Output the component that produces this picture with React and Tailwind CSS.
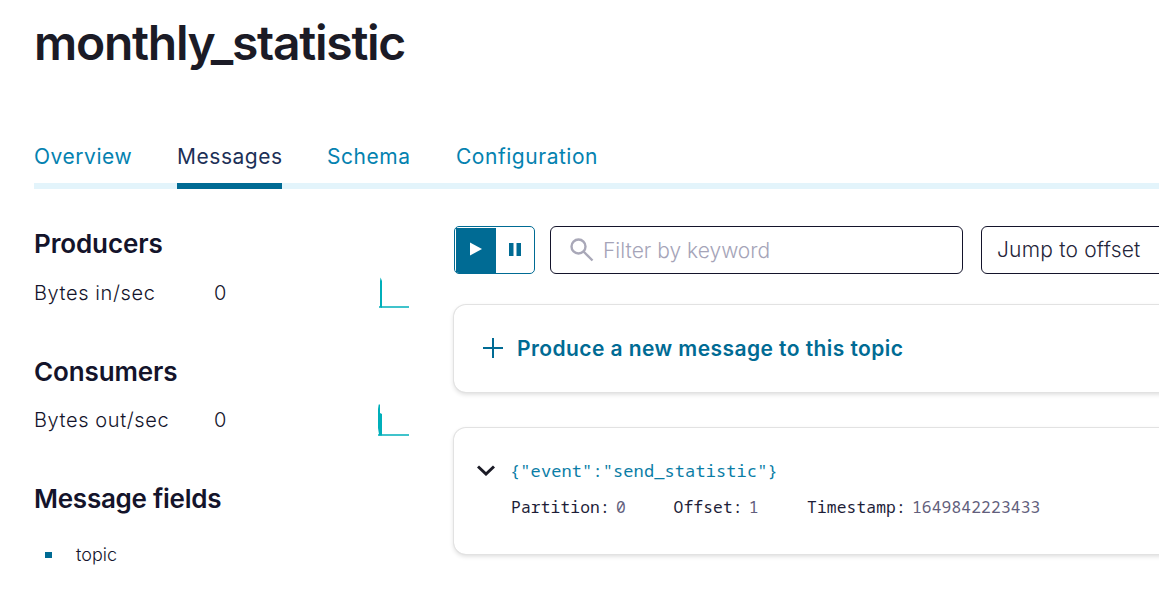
import React from "react";

const TABS = [
  { label: "Overview", active: false, cls: "w-[98px] mr-[45px]" },
  { label: "Messages", active: true, cls: "w-[105px] mr-[45px]" },
  { label: "Schema", active: false, cls: "w-[83px] mr-[46px]" },
  { label: "Configuration", active: false, cls: "" },
];

function Metric({ title, label, value, path, cls }) {
  return (
    <section className="h-[127.5px]">
      <h2 className="h-[34px] text-[26px] font-semibold leading-[34px] tracking-[-0.12px] text-[#14142b]">{title}</h2>
      <div className={"flex h-8 items-center text-[20px] font-[280] leading-8 tracking-[0.6px] text-[#14142b] " + cls}>
        <span className="w-[180px]">{label}</span>
        <span className="grow">{value}</span>
        <svg className="mr-[5px] h-8 w-8 overflow-visible" viewBox="0 0 32 32" fill="none">
          {path}
        </svg>
      </div>
    </section>
  );
}

function Meta({ label, value, cls }) {
  return (
    <span className={cls}>
      <span className="mr-[6px] text-[#1d1d38]">{label}:</span>
      <span className="text-[#625e7c]">{value}</span>
    </span>
  );
}

export default function App() {
  return (
    <div className="h-[594px] w-[1159px] overflow-hidden bg-white pl-[34px] font-['Inter',sans-serif]">
      <h1 className="pt-[14px] text-[48px] font-semibold leading-[58px] tracking-[-1.27px] text-[#1b1b26]">monthly_statistic</h1>
      <nav className="mt-[68px] flex h-[49px] border-b-[6px] border-[#e3f4fb] text-[21px] leading-[34px] tracking-[0.53px]">
        {TABS.map((t) => (
          <div key={t.label} className={t.cls + (t.active ? " h-[49px] shrink-0 border-b-[6px] border-[#006b94] text-[#1c3057]" : " shrink-0 text-[#0482b0]")}>
            {t.label}
          </div>
        ))}
      </nav>
      <div className="flex">
        <aside className="w-[381px] shrink-0 pt-[38px]">
          <Metric
            title="Producers"
            label="Bytes in/sec"
            value="0"
            cls="mt-4"
            path={
              <>
                <path d="M1 30 H31" stroke="#40c3cb" strokeWidth="2" />
                <path d="M2 30 V4 L2.6 0.5 L4 4 V31Z" fill="#00afba" />
              </>
            }
          />
          <Metric
            title="Consumers"
            label="Bytes out/sec"
            value="0"
            cls="mt-[15px]"
            path={
              <>
                <path d="M0 31 H31" stroke="#40c3cb" strokeWidth="2" />
                <path d="M0 24 V5 L0.7 0.5 H2 V9 L4 10 V31.5 H1.2Z" fill="#00afba" />
              </>
            }
          />
          <h2 className="text-[26px] font-semibold leading-[34px] tracking-[-0.25px] text-[#14142b]">Message fields</h2>
          <ul className="mt-[22px] pl-[11px]">
            <li className="flex h-[33px] items-center text-[18px] font-[280] text-[#14142b]">
              <span className="mr-[24px] h-[6px] w-[7px] bg-[#006b94]" />
              topic
            </li>
          </ul>
        </aside>
        <main className="ml-[38px] w-[720px] shrink-0 pt-[37px]">
          <div className="flex h-12 pl-px">
            <div className="flex w-[81px] shrink-0 overflow-hidden rounded-[5px] border border-[#006b94] bg-white pl-px pt-px">
              <div className="flex w-10 items-center justify-center bg-[#006b94]">
                <svg className="mb-[3px] h-[14px] w-3" viewBox="0 0 12 14"><path d="M0 0.5 L12 7 L0 13.5Z" fill="white" /></svg>
              </div>
              <div className="flex grow items-center justify-center">
                <svg className="mb-[3px] h-[13px] w-3" viewBox="0 0 12 13"><path d="M0 0H4.5V13H0Z M7.5 0H12V13H7.5Z" fill="#006b94" /></svg>
              </div>
            </div>
            <div className="ml-[15px] flex w-[413px] shrink-0 items-center rounded-[6px] border border-[#14142b] pl-[19px] text-[21px] font-[280] text-[#a5a4b8]">
              <svg className="h-[24px] w-[24px]" viewBox="0 0 24 24" fill="none" stroke="#a9a8b8" strokeWidth="2.4">
                <circle cx="8.5" cy="8.5" r="7" /><path d="M13.5 13.5 L22.5 22.5" />
              </svg>
              <span className="ml-[9px] pt-[2px]">Filter by keyword</span>
            </div>
            <div className="ml-[18px] flex w-[240px] shrink-0 items-center rounded-[6px] border border-[#14142b] pl-[15px] text-[21px] font-[280] tracking-[0.2px] text-[#25253a]">
              Jump to offset
            </div>
          </div>
          <div className="ml-px mt-[31px] flex h-[87px] items-center rounded-[12px] pl-[29px] shadow-[0_0_0_1px_#e2e2e2,0_2px_5px_rgba(0,0,0,0.16)]">
            <svg className="mb-px h-5 w-5" viewBox="0 0 20 20"><path d="M0 10H20 M10 0V20" stroke="#006b94" strokeWidth="2" /></svg>
            <span className="ml-[14px] text-[21px] font-semibold tracking-[0.43px] text-[#006b94]">Produce a new message to this topic</span>
          </div>
          <div className="ml-px mt-[36px] h-[126px] rounded-[12px] pl-[23px] pt-[28px] font-['Noto_Sans_Mono','Noto_Sans_Mono_CJK_SC','DejaVu_Sans_Mono',monospace] shadow-[0_0_0_1px_#e2e2e2,0_2px_5px_rgba(0,0,0,0.16)]">
            <div className="flex h-[30px] items-center">
              <svg className="mb-[2px] h-[11px] w-[18px]" viewBox="0 0 18 11" fill="none" stroke="#1b1b26" strokeWidth="3"><path d="M1 1.5 L9 9 L17 1.5" /></svg>
              <span className="ml-[15px] text-[17px] tracking-[0.1px] text-[#0a7da6]">{'{"event":"send_statistic"}'}</span>
            </div>
            <div className="mt-[7px] flex h-[28px] items-center pl-[34px] text-[16.3px] tracking-[0.12px]">
              <Meta label="Partition" value="0" cls="w-[162.5px]" />
              <Meta label="Offset" value="1" cls="w-[133.5px]" />
              <Meta label="Timestamp" value="1649842223433" cls="" />
            </div>
          </div>
        </main>
      </div>
    </div>
  );
}
